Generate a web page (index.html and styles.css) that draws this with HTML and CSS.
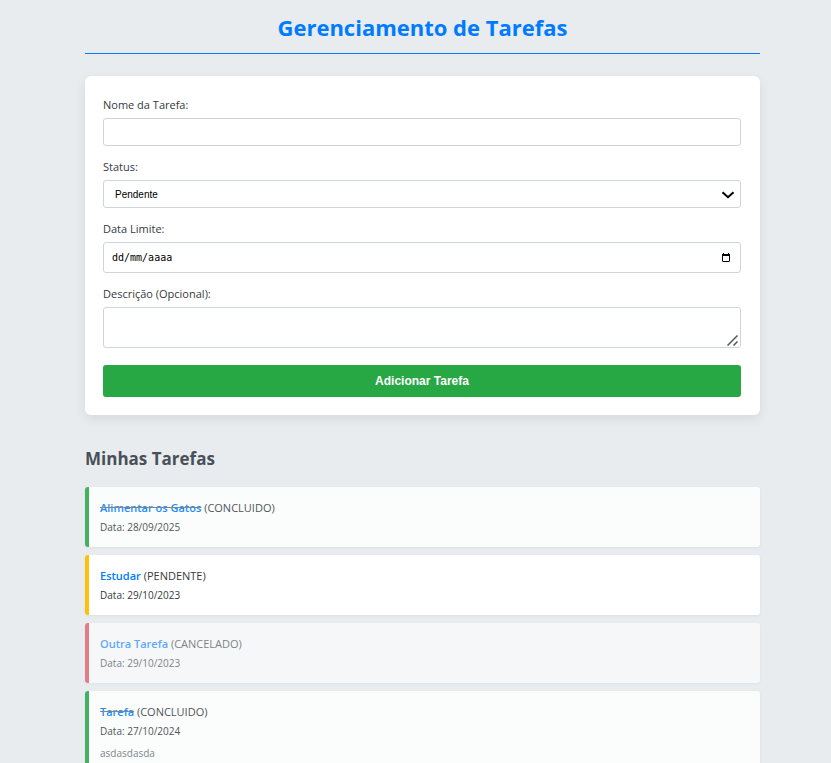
FILE: index.html
```html
<!DOCTYPE html>
<html lang="pt-BR">
<head>
<meta charset="utf-8">
<meta name="viewport" content="width=device-width, initial-scale=1">
<title>Gerenciamento de Tarefas</title>
<link rel="stylesheet" href="styles.css">
</head>
<body>
<main class="page">
  <h1 class="page-title">Gerenciamento de Tarefas</h1>

  <form class="task-form">
    <div class="field">
      <label for="nome">Nome da Tarefa:</label>
      <input class="control" id="nome" type="text">
    </div>
    <div class="field">
      <label for="status">Status:</label>
      <div class="control-wrap">
        <select class="control control-select" id="status">
          <option>Pendente</option>
          <option>Concluido</option>
          <option>Cancelado</option>
        </select>
        <svg class="chevron" viewBox="0 0 14 8" aria-hidden="true"><path d="M1.5 1.2 7 6.2l5.500-5" fill="none" stroke="#000" stroke-width="2"/></svg>
      </div>
    </div>
    <div class="field">
      <label for="data">Data Limite:</label>
      <div class="control-wrap">
        <input class="control control-date" id="data" type="text" placeholder="dd/mm/aaaa">
        <button class="calendar" type="button" aria-label="Abrir calendário">
          <svg viewBox="0 0 8 9" aria-hidden="true"><path d="M.5 1.500h7v6.500q0 .5-.5.5H1q-.5 0-.5-.5z" fill="none" stroke="#000"/><path d="M0 1h8v2H0zM1 0h1v1H1zM6 0h1v1H6z"/></svg>
        </button>
      </div>
    </div>
    <div class="field">
      <label for="descricao">Descrição (Opcional):</label>
      <div class="control-wrap">
        <textarea class="control control-area" id="descricao"></textarea>
        <svg class="grip" viewBox="0 0 11 11" aria-hidden="true"><path d="M.5 10.500l10-10M6.500 10.500l4-4" fill="none" stroke="#555" stroke-width="1.500"/></svg>
      </div>
    </div>
    <button class="submit" type="submit">Adicionar Tarefa</button>
  </form>

  <h2 class="list-title">Minhas Tarefas</h2>
  <ul class="task-list">
    <li class="task task-done">
      <p class="task-head"><strong>Alimentar os Gatos</strong> (CONCLUIDO)</p>
      <p class="task-date">Data: 28/09/2025</p>
    </li>
    <li class="task task-pending">
      <p class="task-head"><strong>Estudar</strong> (PENDENTE)</p>
      <p class="task-date">Data: 29/10/2023</p>
    </li>
    <li class="task task-cancelled">
      <p class="task-head"><strong>Outra Tarefa</strong> (CANCELADO)</p>
      <p class="task-date">Data: 29/10/2023</p>
    </li>
    <li class="task task-done">
      <p class="task-head"><strong>Tarefa</strong> (CONCLUIDO)</p>
      <p class="task-date">Data: 27/10/2024</p>
      <p class="task-note">asdasdasda</p>
    </li>
  </ul>
</main>
</body>
</html>
```
FILE: styles.css
```css
* {
  box-sizing: border-box;
}

html {
  scrollbar-width: none;
}

body {
  margin: 0;
  background: #e8ecef;
  color: #343a40;
  font-family: "Segoe UI", "Open Sans", "Noto Sans", sans-serif;
  font-size: 11px;
  line-height: 22px;
}

.page {
  padding: 12px 71px 24px 85px;
}

.page-title {
  margin: 0 0 22px;
  padding-bottom: 10px;
  border-bottom: 1px solid #007bff;
  color: #007bff;
  font-size: 22px;
  line-height: 31px;
  text-align: center;
}

.task-form {
  display: grid;
  gap: 10px;
  padding: 18px 19px 18px 18px;
  border-radius: 6px;
  background: #fff;
  box-shadow: 0 4px 12px rgba(0, 0, 0, 0.08);
}

.field {
  display: grid;
  gap: 2px;
}

.control-wrap {
  display: grid;
  position: relative;
}

.control {
  width: 100%;
  height: 28px;
  margin: 0;
  padding: 0 8px;
  border: 1px solid #ced4da;
  border-radius: 3px;
  background: #fff;
  color: #000;
  font-family: Arial, "Liberation Sans", sans-serif;
  font-size: 10px;
}

.control-select {
  padding: 0 11px;
  appearance: none;
}

.control-date {
  height: 31px;
  font-family: "DejaVu Sans Mono", monospace;
}

.control-date::placeholder {
  color: #000;
}

.control-area {
  display: block;
  height: 41px;
  resize: none;
}

.chevron {
  position: absolute;
  top: 11px;
  right: 6px;
  width: 14px;
  height: 8px;
  pointer-events: none;
}

.calendar {
  position: absolute;
  top: 11px;
  right: 11px;
  width: 8px;
  height: 9px;
  padding: 0;
  border: 0;
  background: none;
}

.calendar svg {
  display: block;
  width: 8px;
  height: 9px;
}

.grip {
  position: absolute;
  right: 3px;
  bottom: 2px;
  width: 11px;
  height: 11px;
  pointer-events: none;
}

.submit {
  height: 32px;
  margin: 7px 0 0;
  border: 0;
  border-radius: 3px;
  background: #28a745;
  color: #fff;
  font: bold 12px Arial, "Liberation Sans", sans-serif;
}

.list-title {
  margin: 32px 0 16px;
  color: #495057;
  font-size: 17px;
  line-height: 24px;
}

.task-list {
  display: grid;
  gap: 8px;
  margin: 0;
  padding: 0;
  list-style: none;
}

.task {
  padding: 11px 11px 12px;
  border-left: 4px solid #ffc107;
  border-radius: 3px;
  background: #fff;
  box-shadow: 0 1px 3px rgba(0, 0, 0, 0.05);
}

.task p {
  margin: 0;
}

.task .task-head {
  line-height: 20px;
}

.task strong {
  color: #007bff;
  font-weight: 600;
}

.task-done {
  border-left-color: #28a745;
  opacity: 0.85;
}

.task-done strong {
  text-decoration: line-through #6c757d;
}

.task-cancelled {
  border-left-color: #dc3545;
  opacity: 0.6;
}

.task .task-date {
  margin-top: 1px;
  font-size: 10px;
  line-height: 16px;
}

.task .task-note {
  margin-top: 6px;
  color: #6c757d;
  font-size: 10px;
  line-height: 16px;
}
```
